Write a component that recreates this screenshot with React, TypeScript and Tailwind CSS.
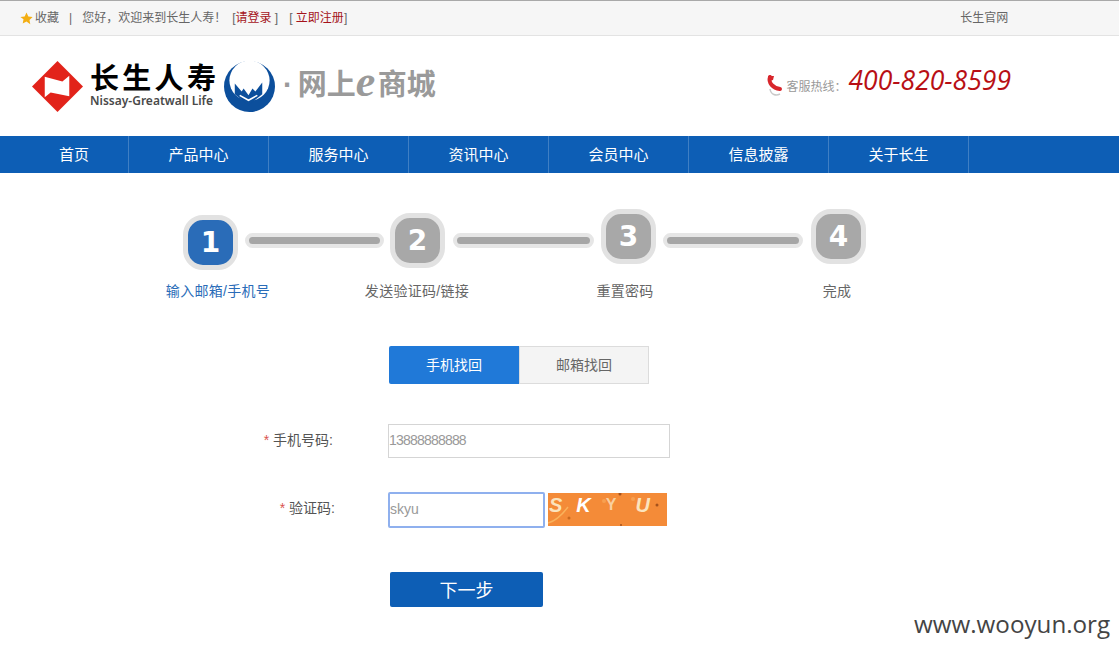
const font = "font-['Liberation_Sans','Noto_Sans_CJK_SC',sans-serif]";

function Star() {
  return (
    <svg width="13" height="13" viewBox="0 0 24 24" className="mr-[2px] mt-[1px]">
      <path d="M12 1l3.4 7.2 7.9 1-5.8 5.4 1.5 7.8L12 17.6l-7 3.8 1.5-7.8L.7 9.2l7.9-1z" fill="#f3ae13" />
    </svg>
  );
}

function DiamondLogo() {
  return (
    <svg width="51" height="51" viewBox="0 0 52 52" className="shrink-0">
      <path d="M26 0L52 26 26 52 0 26z" fill="#e2231a" />
      <path d="M13 16L31 21 38 15 38 36 19 32 13 37z" fill="#fff" />
    </svg>
  );
}

function CircleLogo() {
  return (
    <svg width="51" height="51" viewBox="0 0 52 52" className="shrink-0">
      <circle cx="26" cy="26" r="26" fill="#0c4f9c" />
      <circle cx="26" cy="20" r="20.5" fill="#fff" />
      <path d="M11 23L18 31 20 28 25 35 29 28 32 31 39 22 39 34 25 45 11 34z" fill="#0c4f9c" />
      <path d="M16 35L25 40 34 35" fill="none" stroke="#fff" strokeWidth="1.6" />
    </svg>
  );
}

function Phone() {
  return (
    <svg width="18" height="23" viewBox="0 0 18 23" className="shrink-0">
      <path d="M4 3C2 9 7 14 14 15" fill="none" stroke="#d8262c" strokeWidth="4" strokeLinecap="round" />
      <path d="M2 2L8 2 7 6 3 7z" fill="#d8262c" />
      <path d="M4 15C5 21 10 22 14 20" fill="none" stroke="#c9c9c9" strokeWidth="1.5" />
    </svg>
  );
}

function Step({ n, active, className }: { n: number; active?: boolean; className: string }) {
  return (
    <div
      className={`w-[55px] h-[55px] shrink-0 rounded-[20px] border-[5px] border-[#e2e2e2] flex items-center justify-center text-white text-[28px] font-bold font-['DejaVu_Sans',sans-serif] ${
        active ? "bg-[#2a6cb8]" : "bg-[#a8a8a8]"
      } ${className}`}
    >
      {n}
    </div>
  );
}

function Bar({ className }: { className: string }) {
  return <div className={`h-[15px] mt-[24px] rounded-full border-4 border-[#e6e6e6] bg-[#a6a6a6] shrink-0 ${className}`} />;
}

function Captcha() {
  return (
    <div className="relative ml-[3px] mb-[1px] w-[119px] h-[33px] bg-[#f48b38] flex items-start pl-[1px] pt-[0px] text-[#fbe4be] text-[20px] leading-[24px] font-bold italic overflow-hidden">
      <svg width="119" height="33" viewBox="0 0 119 33" className="absolute left-0 top-0">
        <path d="M0 30C8 28 14 22 20 14" fill="none" stroke="#f9b25c" strokeWidth="1.5" />
        <circle cx="72" cy="1" r="1.5" fill="#a5521c" />
        <circle cx="109" cy="12" r="1.5" fill="#a5521c" />
        <circle cx="21" cy="25" r="1.5" fill="#c9691f" />
        <circle cx="73" cy="32" r="1" fill="#a5521c" />
        <circle cx="56" cy="8" r="2" fill="#f7a050" />
        <circle cx="85" cy="6" r="2" fill="#f7a050" />
      </svg>
      <span className="relative">S</span>
      <span className="relative ml-[14px] text-white">K</span>
      <span className="relative ml-[15px] text-[16px] not-italic text-[#f9cf9f]">Y</span>
      <span className="relative ml-[19px]">U</span>
    </div>
  );
}

const nav = ["产品中心", "服务中心", "资讯中心", "会员中心", "信息披露", "关于长生"];

export default function App() {
  return (
    <div className={`relative w-[1119px] h-[653px] overflow-hidden bg-white ${font}`}>
      <div className="h-[36px] bg-[#f6f6f6] border-t border-t-[#a9a9a9] border-b border-b-[#e3e3e3] flex items-center pl-[20px] text-[12px] text-[#666]">
        <Star />
        <span>收藏</span>
        <span className="ml-[10px]">|</span>
        <span className="ml-[10px]">您好，欢迎来到长生人寿！</span>
        <span className="ml-[6px]">[<span className="text-[#a5141b]">请登录</span> ]</span>
        <span className="ml-[11px]">[ <span className="text-[#a5141b]">立即注册</span>]</span>
        <span className="ml-[613px]">长生官网</span>
      </div>

      <div className="h-[100px] flex items-center pl-[32px] pr-[108px]">
        <DiamondLogo />
        <div className="ml-[7px] w-[127px]">
          <div className="text-[29px] leading-[30px] font-bold text-black whitespace-nowrap tracking-[3.3px]">长生人寿</div>
          <div className="text-[12px] leading-[14px] font-semibold text-[#4a4a4a] whitespace-nowrap font-['Noto_Sans',sans-serif]">Nissay-Greatwall Life</div>
        </div>
        <div className="ml-[7px]"><CircleLogo /></div>
        <div className="ml-[8px] flex items-center text-[29px] font-bold text-[#9a9a9a] whitespace-nowrap">
          <span>·</span>
          <span className="ml-[5px]">网上</span>
          <span className="w-[22px] italic font-['Liberation_Serif',serif] text-[44px] leading-none pb-[8px]">e</span>
          <span>商城</span>
        </div>
        <div className="ml-auto flex items-center mt-[-1px]">
          <Phone />
          <span className="ml-[2px] mt-[2px] text-[12px] text-[#999]">客服热线：</span>
          <span className="ml-[2px] mb-[10px] text-[26.5px] italic text-[#b80f14] font-['Open_Sans','Liberation_Sans',sans-serif]">400-820-8599</span>
        </div>
      </div>

      <div className="h-[37px] bg-[#0d5eb5] flex pl-[20px] text-[15px] text-white">
        <div className="w-[109px] h-full pt-[1px] flex items-center justify-center border-r border-r-[#3f7fc4]">首页</div>
        {nav.map((t) => (
          <div key={t} className="w-[140px] h-full pt-[1px] flex items-center justify-center border-r border-r-[#3f7fc4]">{t}</div>
        ))}
      </div>

      <div className="flex items-start pl-[183px] mt-[36px]">
        <Step n={1} active className="mt-[6px]" />
        <Bar className="ml-[7px] w-[139px]" />
        <Step n={2} className="ml-[6px] mt-[4px]" />
        <Bar className="ml-[8px] w-[141px]" />
        <Step n={3} className="ml-[7px]" />
        <Bar className="ml-[7px] w-[140px]" />
        <Step n={4} className="ml-[8px]" />
      </div>

      <div className="flex pl-[118px] mt-[11px] text-[14px] leading-[20px] text-[#666] tracking-[0.3px]">
        <div className="w-[200px] text-center text-[#2a6cb8]">输入邮箱/手机号</div>
        <div className="w-[198px] text-center">发送验证码/链接</div>
        <div className="w-[218px] text-center">重置密码</div>
        <div className="w-[206px] text-center">完成</div>
      </div>

      <div className="flex pl-[389px] mt-[45px] text-[14px]">
        <div className="w-[130px] h-[38px] pt-[1px] bg-[#2079d8] text-white rounded-l-[2px] flex items-center justify-center">手机找回</div>
        <div className="w-[130px] h-[38px] pt-[1px] bg-[#f4f4f4] text-[#666] border border-[#dcdcdc] flex items-center justify-center">邮箱找回</div>
      </div>

      <div className="flex items-center mt-[40px] text-[14px] text-[#555]">
        <div className="w-[333px] text-right pb-[2px]"><span className="text-[#d9534f]">*</span> 手机号码:</div>
        <div className="ml-[55px] w-[282px] h-[34px] border border-[#d5d5d5] flex items-center text-[#999] pb-[1px] tracking-[-0.8px]">13888888888</div>
      </div>

      <div className="flex items-center mt-[34px] text-[14px] text-[#555]">
        <div className="w-[335px] text-right pb-[4px]"><span className="text-[#d9534f]">*</span> 验证码:</div>
        <div className="ml-[53px] w-[157px] h-[36px] rounded-[2px] border-2 border-[#8fb0ee] flex items-center text-[#999] pb-[1px]">skyu</div>
        <Captcha />
      </div>

      <div className="pl-[390px] mt-[44px]">
        <div className="w-[153px] h-[35px] pt-[3px] bg-[#0d5eb5] rounded-[2px] text-white text-[18px] flex items-center justify-center">下一步</div>
      </div>

      <div className="absolute left-[914px] top-[607px] text-[24.2px] leading-[34px] text-[#444] font-['Open_Sans',sans-serif]">www.wooyun.org</div>
    </div>
  );
}
